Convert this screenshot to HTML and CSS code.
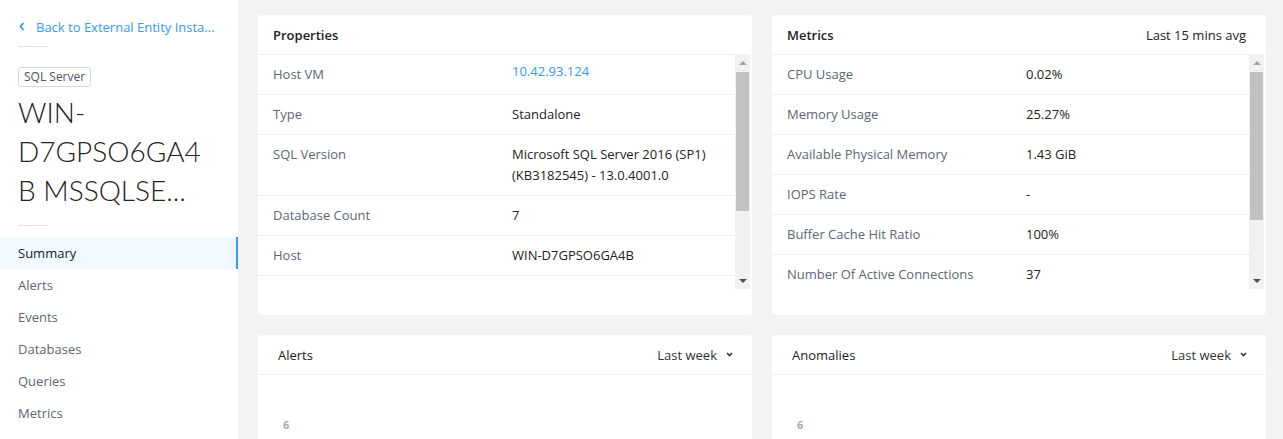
FILE: index.html
```html
<!DOCTYPE html>
<html>
<head>
<meta charset="utf-8">
<link rel="stylesheet" href="styles.css">
</head>
<body>
<aside class="sidebar">
  <a class="back" href="#">
    <svg class="back-icon" width="6" height="9" viewBox="0 0 6 9"><polyline points="4.5,1 1.5,4.5 4.5,8" fill="none" stroke="#2e9bff" stroke-width="1.8"/></svg>
    <span>Back to External Entity Insta...</span>
  </a>
  <div class="rule"></div>
  <div class="entity">
    <span class="tag">SQL Server</span>
    <h1 class="entity-name"><span>WIN-</span><span>D7GPSO6GA4</span><span>B MSSQLSE...</span></h1>
  </div>
  <div class="rule"></div>
  <nav class="nav">
    <a class="nav-item active" href="#">Summary</a>
    <a class="nav-item" href="#">Alerts</a>
    <a class="nav-item" href="#">Events</a>
    <a class="nav-item" href="#">Databases</a>
    <a class="nav-item" href="#">Queries</a>
    <a class="nav-item" href="#">Metrics</a>
  </nav>
</aside>
<main class="content">
  <section class="card">
    <header class="card-head"><h2 class="card-title">Properties</h2></header>
    <div class="scroll-area">
      <div class="rows">
        <div class="row"><div class="label">Host VM</div><div class="value"><a class="link" href="#">10.42.93.124</a></div></div>
        <div class="row"><div class="label">Type</div><div class="value">Standalone</div></div>
        <div class="row"><div class="label">SQL Version</div><div class="value">Microsoft SQL Server 2016 (SP1)<br>(KB3182545) - 13.0.4001.0</div></div>
        <div class="row"><div class="label">Database Count</div><div class="value">7</div></div>
        <div class="row"><div class="label">Host</div><div class="value">WIN-D7GPSO6GA4B</div></div>
      </div>
      <div class="scrollbar">
        <div class="sb-btn up"></div>
        <div class="sb-track"><div class="sb-thumb thumb-props"></div></div>
        <div class="sb-btn down"></div>
      </div>
    </div>
  </section>
  <section class="card">
    <header class="card-head"><h2 class="card-title">Metrics</h2><span class="head-note">Last 15 mins avg</span></header>
    <div class="scroll-area">
      <div class="rows">
        <div class="row"><div class="label">CPU Usage</div><div class="value">0.02%</div></div>
        <div class="row"><div class="label">Memory Usage</div><div class="value">25.27%</div></div>
        <div class="row"><div class="label">Available Physical Memory</div><div class="value">1.43 GiB</div></div>
        <div class="row"><div class="label">IOPS Rate</div><div class="value">-</div></div>
        <div class="row"><div class="label">Buffer Cache Hit Ratio</div><div class="value">100%</div></div>
        <div class="row"><div class="label">Number Of Active Connections</div><div class="value">37</div></div>
      </div>
      <div class="scrollbar">
        <div class="sb-btn up"></div>
        <div class="sb-track"><div class="sb-thumb thumb-metrics"></div></div>
        <div class="sb-btn down"></div>
      </div>
    </div>
  </section>
  <section class="card chart-card">
    <header class="card-head wide"><h2 class="card-title light">Alerts</h2>
      <span class="range">Last week <svg width="7" height="5" viewBox="0 0 7 5"><polyline points="1,1 3.5,3.5 6,1" fill="none" stroke="#333" stroke-width="1.6"/></svg></span>
    </header>
    <div class="chart"><span class="axis">6</span></div>
  </section>
  <section class="card chart-card">
    <header class="card-head wide"><h2 class="card-title light">Anomalies</h2>
      <span class="range">Last week <svg width="7" height="5" viewBox="0 0 7 5"><polyline points="1,1 3.5,3.5 6,1" fill="none" stroke="#333" stroke-width="1.6"/></svg></span>
    </header>
    <div class="chart"><span class="axis">6</span></div>
  </section>
</main>
</body>
</html>
```
FILE: styles.css
```css
* { box-sizing: border-box; }
html, body { margin: 0; height: 100%; }
body {
  display: flex;
  height: 439px;
  overflow: hidden;
  font-family: "Open Sans", Lato, sans-serif;
  font-size: 13px;
  color: #222;
  background: #f2f3f5;
}
a { text-decoration: none; }

.sidebar {
  width: 238px;
  flex: none;
  background: #fff;
  display: flex;
  flex-direction: column;
}
.back {
  display: flex;
  align-items: center;
  gap: 11px;
  color: #2e9bff;
  padding: 17px 0 0 19px;
  height: 36px;
  line-height: 18px;
}
.rule {
  width: 30px;
  height: 1px;
  background: #dfe3e8;
  margin-left: 18px;
  margin-top: 10px;
}
.entity {
  padding: 20px 0 0 18px;
  height: 168px;
}
.tag {
  display: inline-block;
  height: 20px;
  line-height: 18px;
  padding: 0 5px;
  border: 1px solid #d5d9de;
  border-radius: 3px;
  font-size: 12px;
  color: #4a5563;
}
.entity-name {
  margin: 6px 0 0;
  font-family: Lato, sans-serif;
  font-size: 28px;
  font-weight: 300;
  line-height: 39px;
  color: #222;
}
.entity-name span { display: block; }
.nav { margin-top: 11px; display: flex; flex-direction: column; }
.nav-item {
  height: 32px;
  line-height: 32px;
  padding-left: 18px;
  color: #5b6677;
}
.nav-item.active {
  background: #f1f8fe;
  color: #222;
  border-right: 2px solid #2e9bff;
}

.content {
  flex: 1;
  padding: 15px 17px 0 20px;
  display: grid;
  grid-template-columns: 494px 494px;
  grid-template-rows: 300px 120px;
  gap: 20px;
}
.card {
  background: #fff;
  border-radius: 4px;
  display: flex;
  flex-direction: column;
}
.card-head {
  height: 40px;
  flex: none;
  display: flex;
  align-items: center;
  justify-content: space-between;
  padding: 0 20px 0 15px;
  border-bottom: 1px solid #eef0f2;
}
.card-head.wide { padding: 0 19px 0 20px; }
.card-title {
  margin: 0;
  font-size: 13px;
  font-weight: 600;
  color: #222;
}
.card-title.light { font-weight: 400; }
.head-note { color: #222; }
.range { display: flex; align-items: center; gap: 9px; color: #333; }

.scroll-area {
  height: 234px;
  margin-right: 2px;
  display: flex;
}
.rows { flex: 1; overflow: hidden; }
.scrollbar {
  width: 15px;
  flex: none;
  background: #f1f1f1;
  display: flex;
  flex-direction: column;
}
.sb-btn {
  height: 16px;
  flex: none;
  display: flex;
  align-items: center;
  justify-content: center;
}
.sb-btn::before {
  content: "";
  width: 0;
  height: 0;
  border-left: 4px solid transparent;
  border-right: 4px solid transparent;
}
.sb-btn.up::before { border-bottom: 4px solid #a3a3a3; }
.sb-btn.down::before { border-top: 4px solid #505050; }
.sb-track { flex: 1; padding: 1px 1px 0; }
.sb-thumb { background: #c1c1c1; }
.thumb-props { height: 139px; }
.thumb-metrics { height: 148px; }

.row {
  display: flex;
  padding: 9px 0;
  line-height: 21px;
  border-bottom: 1px solid #f0f1f3;
}
.label {
  width: 254px;
  flex: none;
  padding-left: 15px;
  color: #5b6677;
}
.value { color: #222; }
.link { color: #2e9bff; display: inline-block; transform: translateY(-3px); }

.chart { padding: 40px 0 0 25px; }
.axis { font-size: 11px; font-weight: 700; color: #a3abb6; }
```
